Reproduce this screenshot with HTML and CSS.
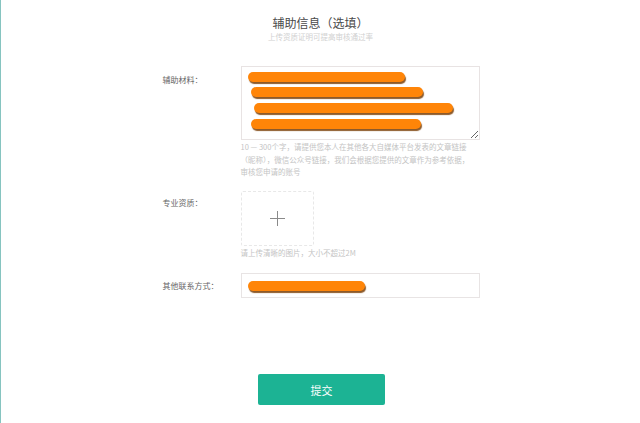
FILE: index.html
```html
<!DOCTYPE html>
<html>
  <head>
    <title>辅助信息</title>
    <meta charset="UTF-8">
    <meta name="viewport" content="width=device-width, initial-scale=1.0">
    <link rel="stylesheet" href="styles.css">
  </head>
  <body>
    <div class="page">
      <h2 class="title">辅助信息（选填）</h2>
      <p class="subtitle">上传资质证明可提高审核通过率</p>

      <form class="form">
        <!-- 辅助材料 -->
        <div class="row">
          <label class="label label-area">辅助材料：</label>
          <div class="field">
            <div class="text-area">
              <div class="redact bar-1"></div>
              <div class="redact bar-2"></div>
              <div class="redact bar-3"></div>
              <div class="redact bar-4"></div>
            </div>
            <p class="hint hint-area">10 — 300个字，请提供您本人在其他各大自媒体平台发表的文章链接（昵称），微信公众号链接，我们会根据您提供的文章作为参考依据，审核您申请的账号</p>
          </div>
        </div>

        <!-- 专业资质 -->
        <div class="row row-upload">
          <label class="label label-upload">专业资质：</label>
          <div class="field">
            <div class="upload">
              <span class="plus"></span>
            </div>
            <p class="hint">请上传清晰的图片，大小不超过2M</p>
          </div>
        </div>

        <!-- 其他联系方式 -->
        <div class="row row-contact">
          <label class="label label-contact">其他联系方式：</label>
          <div class="field">
            <div class="text-input">
              <div class="redact bar-contact"></div>
            </div>
          </div>
        </div>

        <div class="actions">
          <button type="button" class="submit">提交</button>
        </div>
      </form>
    </div>
  </body>
</html>
```

FILE: styles.css
```css
html, body {
    margin: 0;
    padding: 0;
    background-color: #fff;
}
body {
    font-family: "Noto Sans CJK SC", "Noto Sans", "Liberation Sans", sans-serif;
    border-left: 1px solid #86c4c0;
    height: 423px;
    box-sizing: border-box;
}
.page {
    padding-top: 15px;
}
.title {
    margin: 0;
    font-size: 12px;
    line-height: 16px;
    font-weight: normal;
    color: #4a4a4a;
    text-align: center;
}
.subtitle {
    margin: 1px 0 0;
    font-size: 7.5px;
    line-height: 10px;
    color: #d0d0d0;
    text-align: center;
}
.form {
    width: 318px;
    margin: 24px auto 0;
    padding-left: 2px;
}
.row {
    display: flex;
}
.row-upload {
    margin-top: 12px;
}
.row-contact {
    margin-top: 14px;
}
.label {
    width: 78px;
    flex-shrink: 0;
    font-size: 8px;
    line-height: 12px;
    color: #666;
}
.label-area {
    padding-top: 8px;
}
.label-upload {
    padding-top: 6px;
}
.label-contact {
    padding-top: 7px;
}
.field {
    width: 239px;
}
.text-area {
    height: 74px;
    box-sizing: border-box;
    border: 1px solid #e8e3e3;
    padding-top: 5px;
    overflow: auto;
    resize: vertical;
}
.redact {
    height: 10px;
    border-radius: 5px;
    background-color: #ff8508;
    box-shadow: 1px 2px 1px #8d5a2a;
}
.bar-1 {
    width: 157px;
    margin-left: 6px;
}
.bar-2 {
    width: 172px;
    margin: 5px 0 0 9px;
}
.bar-3 {
    width: 199px;
    margin: 6px 0 0 12px;
}
.bar-4 {
    width: 170px;
    margin: 6px 0 0 9px;
}
.bar-contact {
    width: 117px;
    margin-left: 6px;
}
.hint {
    margin: 1px 0 0;
    font-size: 7.5px;
    line-height: 12.5px;
    color: #c4c4c4;
}
.hint-area {
    width: 234px;
}
.upload {
    width: 73px;
    height: 55px;
    box-sizing: border-box;
    border: 1px dashed #e8e8e8;
    border-radius: 2px;
    display: flex;
    align-items: center;
    justify-content: center;
}
.plus {
    position: relative;
    width: 15px;
    height: 15px;
}
.plus::before,
.plus::after {
    content: "";
    position: absolute;
    background-color: #8a8a8a;
}
.plus::before {
    left: 0;
    top: 7px;
    width: 15px;
    height: 1px;
}
.plus::after {
    left: 7px;
    top: 0;
    width: 1px;
    height: 15px;
}
.text-input {
    height: 25px;
    box-sizing: border-box;
    border: 1px solid #e8e4e4;
    padding-top: 7px;
}
.actions {
    margin-top: 76px;
    display: flex;
    justify-content: center;
}
.submit {
    width: 127px;
    height: 31px;
    border: none;
    border-radius: 2px;
    background-color: #1cb394;
    color: #fff;
    font-family: "Noto Sans CJK SC", sans-serif;
    font-size: 11px;
    cursor: pointer;
}
.submit:hover {
    background-color: #18a084;
}
```
